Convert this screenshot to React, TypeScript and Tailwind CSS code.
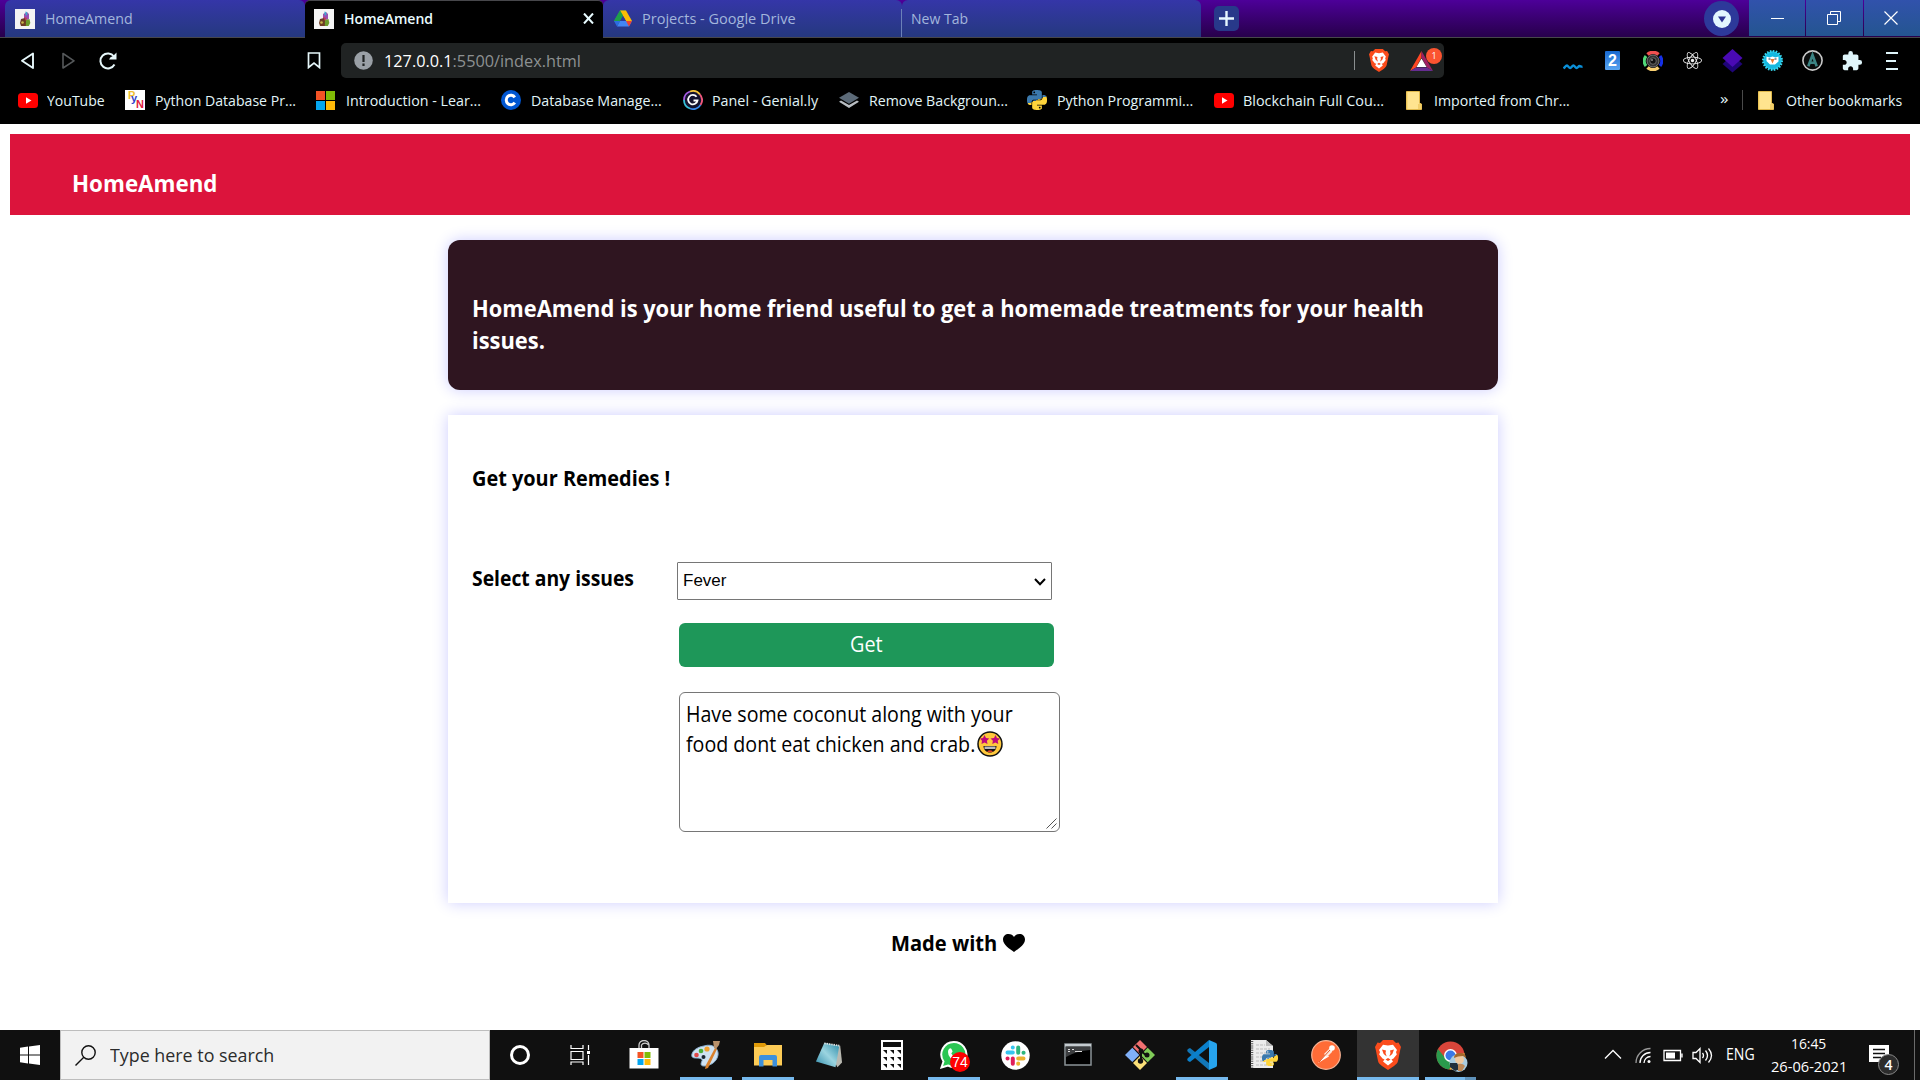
import { useLayoutEffect, useRef, type ReactNode } from 'react';
import { SiPython } from 'react-icons/si';
import { FaReact } from 'react-icons/fa';
import { MdExtension } from 'react-icons/md';

/* Single line of text condensed or expanded to the width of its box. */
function T({ className = '', children }: { className?: string; children: ReactNode }) {
  const box = useRef<HTMLDivElement>(null);
  const text = useRef<HTMLSpanElement>(null);
  useLayoutEffect(() => {
    const fit = () => {
      if (!box.current || !text.current) return;
      text.current.style.transform = `scaleX(${box.current.clientWidth / text.current.offsetWidth})`;
    };
    fit();
    document.fonts?.ready.then(fit);
  }, []);
  return (
    <div ref={box} className={`shrink-0 whitespace-nowrap ${className}`}>
      <span ref={text} className="inline-block origin-left">{children}</span>
    </div>
  );
}

function Favicon() {
  return (
    <svg width="20" height="20" viewBox="0 0 20 20" className="shrink-0">
      <rect width="20" height="20" fill="#f4f4f4" />
      <path d="M9 5l3-2 2 2v5l-2 1-3-1z" fill="#9a4fb0" />
      <path d="M10.500 2.500l1.500.5.500 3-2 .5z" fill="#3fa8d0" />
      <path d="M6 10l4-1 2 3-1 5H6l-1-3z" fill="#6d3b24" />
      <path d="M11 11l3.500-1 .8 4-1.500 3h-3z" fill="#6c9c2c" />
      <circle cx="7.500" cy="13.500" r="1.300" fill="#c9b84a" />
      <path d="M9 8l3 1-1 3z" fill="#c33b50" />
    </svg>
  );
}

function DriveIcon() {
  return (
    <svg width="18" height="17" viewBox="0 0 18 16" className="shrink-0">
      <path d="M6 0h6L4 14 0 10.500z" fill="#34a853" />
      <path d="M6 0h6l6 10.500h-6z" fill="#fbbc04" />
      <path d="M6 0l3 5-3 5.500H0z" fill="#1e9e4a" />
      <path d="M6 10.500h12L15 16H3z" fill="#4285f4" />
      <path d="M0 10.500h6L3 16z" fill="#2b6de0" />
      <path d="M12 10.500h6L15 16z" fill="#ea4335" />
      <path d="M9 5.500l2.800 5H6.200z" fill="#2e3899" />
    </svg>
  );
}

function YouTube() {
  return (
    <svg width="20" height="15" viewBox="0 0 20 15" className="shrink-0">
      <rect width="20" height="15" rx="3.500" fill="#f00" />
      <path d="M8 4.300l5.500 3.200L8 10.700z" fill="#fff" />
    </svg>
  );
}

function Folder() {
  return (
    <svg width="16" height="19" viewBox="0 0 16 19" className="shrink-0">
      <path d="M.5.500h13V12l2 1v5.500H.5z" fill="#ffe48f" stroke="#e0b84a" />
      <path d="M12 18v-5h3.500v5z" fill="#f3cf6a" />
      <path d="M1 1v17" stroke="#f6cf62" />
    </svg>
  );
}

function PynIcon() {
  return (
    <div className="relative h-5 w-5 shrink-0 bg-white font-['Liberation_Sans'] text-[11px] leading-none font-bold">
      <span className="absolute top-0 left-[3px] text-[#f0c030]">P</span>
      <span className="absolute top-[3px] left-[6px] text-[#3040c8]">y</span>
      <span className="absolute top-[9px] left-[11px] text-[#e02040]">N</span>
    </div>
  );
}

function MsIcon({ size }: { size: number }) {
  return (
    <svg width={size} height={size} viewBox="0 0 19 19" className="shrink-0">
      <path d="M0 0h9v9H0z" fill="#f35325" />
      <path d="M10 0h9v9h-9z" fill="#81bc06" />
      <path d="M0 10h9v9H0z" fill="#05a6f0" />
      <path d="M10 10h9v9h-9z" fill="#ffba08" />
    </svg>
  );
}

function CourseraIcon() {
  return (
    <svg width="20" height="20" viewBox="0 0 20 20" className="shrink-0">
      <circle cx="10" cy="10" r="10" fill="#0056d2" />
      <path d="M13.800 7.300A4.700 4.700 0 1 0 13.800 12.700" fill="none" stroke="#fff" strokeWidth="3" />
    </svg>
  );
}

function GeniallyIcon() {
  return (
    <svg width="20" height="20" viewBox="0 0 20 20" className="shrink-0">
      <circle cx="10" cy="10" r="9.500" fill="#15132e" />
      <g fill="none" strokeWidth="1.800">
        <path d="M1 10A9 9 0 0 1 7 1.500" stroke="#a55be0" />
        <path d="M7 1.500A9 9 0 0 1 17 4.500" stroke="#f5c33b" />
        <path d="M17 4.500A9 9 0 0 1 17.500 15" stroke="#f0587c" />
        <path d="M17.500 15A9 9 0 0 1 7 18.500" stroke="#3a8cf0" />
        <path d="M7 18.500A9 9 0 0 1 1 10" stroke="#38c0d8" />
        <path d="M13.600 6.800A4.700 4.700 0 1 0 14.500 10.500H10.500" stroke="#fff" />
      </g>
    </svg>
  );
}

function LayersIcon() {
  return (
    <svg width="20" height="16" viewBox="0 0 20 16" className="shrink-0">
      <path d="M2 8.500L10 13l8-4.500 2 1.300L10 16 0 9.800z" fill="#b9bec3" />
      <path d="M10 0l10 5.800-10 6L0 5.800z" fill="#5c6a78" />
    </svg>
  );
}

function PythonLogo({ size }: { size: number }) {
  return (
    <svg width={size} height={size} viewBox="0 0 24 24" className="shrink-0">
      <defs>
        <linearGradient id="py" x1="0.3" y1="0" x2="0.7" y2="1">
          <stop offset=".5" stopColor="#3b79ad" />
          <stop offset=".5" stopColor="#ffd43b" />
        </linearGradient>
      </defs>
      <SiPython size={24} style={{ fill: 'url(#py)' }} />
    </svg>
  );
}

function BraveIcon({ w, h }: { w: number; h: number }) {
  return (
    <svg width={w} height={h} viewBox="0 0 26 30" preserveAspectRatio="none" className="shrink-0">
      <path d="M8 0h10l3 3 2.500-.4L26 7l-.8 3L23 21c-.4 2-2 3.500-4 5l-6 4-6-4c-2-1.500-3.600-3-4-5L.8 10 0 7l2.500-4.400L5 3z" fill="#fb4c1c" />
      <path d="M13 5.500l5-.8L22 10l-1 2 .8 2.500-3.300 4-2 .9 1.500 2.200L13 25.500l-5-3.900 1.500-2.200-2-.9-3.300-4L5 12l-1-2 4-5.300z" fill="#fff" />
      <path d="M7 9.500l4 1-.5 2.500 1.200 3.500-3-2.500zM19 9.500l-4 1 .5 2.500-1.200 3.500 3-2.500zM13 18l2.500 1.500L13 21l-2.500-1.500z" fill="#fb4c1c" />
    </svg>
  );
}

function Tab({ icon, children, className }: { icon?: ReactNode; children: ReactNode; className: string }) {
  return (
    <div className={`flex h-[37px] shrink-0 items-center rounded-t-[6px] bg-linear-to-b from-[#3536a8] to-[#25387f] text-[#a3b6dc] ${className}`}>
      {icon}
      {children}
    </div>
  );
}

function TabStrip() {
  return (
    <div className="flex h-[38px] items-start border-b border-[#47474b] bg-linear-to-b from-[#4d0099] to-[#27004b] pl-[5px] text-[15px]">
      <Tab className="w-[300px] gap-[10px] pl-[10px]" icon={<Favicon />}>
        <T className="w-[88px]">HomeAmend</T>
      </Tab>
      <div className="flex h-[38px] w-[298px] shrink-0 items-center gap-[10px] rounded-t-[5px] border-t border-[#47474b] bg-black pb-[2px] pl-[9px] font-semibold text-[#e8fbff]">
        <Favicon />
        <T className="w-[89px]">HomeAmend</T>
        <svg width="11" height="11" viewBox="0 0 11 11" className="ml-[140px]">
          <path d="M1 .5l9 10M10 .5l-9 10" stroke="#e8fbff" strokeWidth="2" />
        </svg>
      </div>
      <Tab className="w-[299px] gap-[10px] pl-[11px]" icon={<DriveIcon />}>
        <T className="w-[154px]">Projects - Google Drive</T>
      </Tab>
      <Tab className="w-[299px]" icon={<div className="mt-[9px] mr-2 -ml-px h-7 w-px bg-[#6b80b8]" />}>
        <T className="ml-px w-[57px]">New Tab</T>
      </Tab>
      <div className="mt-[6px] ml-[13px] flex h-[25px] w-[25px] items-center justify-center rounded-[5px] bg-[#28398a]">
        <svg width="15" height="15" viewBox="0 0 15 15">
          <path d="M7.500 0v15M0 7.500h15" stroke="#e6f7ff" strokeWidth="2.400" />
        </svg>
      </div>
      <div className="mt-px ml-auto flex h-[35px] w-[35px] items-center justify-center rounded-full bg-[#2d399a]">
        <svg width="18" height="18" viewBox="0 0 18 18">
          <circle cx="9" cy="9" r="9" fill="#e2f7ff" />
          <path d="M5 6.500h8L9 12.500z" fill="#2d3494" />
        </svg>
      </div>
      <div className="ml-[10px] flex h-9 gap-px">
        <div className="flex w-14 items-center justify-center bg-linear-to-b from-[#3152ac] to-[#245590]">
          <div className="h-px w-[13px] bg-white" />
        </div>
        <div className="flex w-[57px] items-center justify-center bg-linear-to-b from-[#3152ac] to-[#245590] pr-[2px]">
          <svg width="14" height="14" viewBox="0 0 14 14" fill="none" stroke="#fff">
            <path d="M.5 3.500h10v10H.5zM3.500 3V.500h10v10H11" />
          </svg>
        </div>
        <div className="flex w-14 items-center justify-center bg-linear-to-b from-[#3152ac] to-[#245590] pr-[2px]">
          <svg width="14" height="14" viewBox="0 0 14 14" stroke="#fff" strokeWidth="1.200">
            <path d="M.5.500l13 13M13.500.500l-13 13" />
          </svg>
        </div>
      </div>
    </div>
  );
}

function Extensions() {
  return (
    <div className="ml-auto flex items-center">
      <svg width="20" height="20" viewBox="0 0 20 20">
        <path d="M.5 17.500C2 16 3 14.500 4 14.500s2 2.500 3.200 2.500 2-2.500 3.200-2.500 2 2.500 3.200 2.500 1.800-2 2.900-2 1.500 1 3 .5" fill="none" stroke="#0a8fd8" strokeWidth="2.400" />
      </svg>
      <div className="ml-[22px] flex h-[19px] w-[15px] items-center justify-center rounded-[1px] bg-linear-to-b from-[#1769d0] to-[#58a4f0] font-['Liberation_Sans'] text-[16px] font-bold text-white">2</div>
      <svg width="20" height="20" viewBox="0 0 20 20" className="ml-[23px]" fill="none">
        <path d="M4.500 3.500a8.500 8.500 0 0 1 11 0" stroke="#f05050" strokeWidth="3.600" />
        <path d="M17 5a8.500 8.500 0 0 1 0 10" stroke="#1530e8" strokeWidth="3" />
        <path d="M15.500 16.500a8.500 8.500 0 0 1-11 0" stroke="#f8cf70" strokeWidth="3.600" />
        <path d="M3 15A8.500 8.500 0 0 1 3 5" stroke="#52d878" strokeWidth="3" />
        <circle cx="10" cy="10" r="6" fill="#333" stroke="#777" />
        <circle cx="10" cy="10" r="3.300" fill="#111" stroke="#666" />
        <circle cx="9" cy="9" r="1" fill="#888" />
      </svg>
      <FaReact size={19} color="#f2f2f2" className="ml-[20px]" />
      <svg width="21" height="24" viewBox="0 0 21 24" className="ml-[20px]">
        <path d="M10.500 6L20.500 15 10.500 23.500.5 15z" fill="#1f0478" />
        <path d="M10.500 0L20.500 9 10.500 18 .5 9z" fill="#4a0ab4" />
      </svg>
      <svg width="21" height="21" viewBox="0 0 21 21" className="ml-[19px]">
        <circle cx="10.500" cy="10.500" r="9.300" fill="#14b8e0" stroke="#38d8f0" strokeWidth="2.400" strokeDasharray="1.600 1.320" />
        <path d="M4.500 6.500l3 1 3-1 3 1 3-1v5L13 14.500H8l-3.500-3.500z" fill="#fff" />
        <path d="M8.500 9h4l-2 4.500z" fill="#e87830" />
        <path d="M6.500 9h2M12.500 9h2" stroke="#234" strokeWidth="1.200" />
      </svg>
      <svg width="21" height="21" viewBox="0 0 21 21" className="ml-[19px]">
        <circle cx="10.500" cy="10.500" r="9.600" fill="#0a0c0c" stroke="#c9c9c9" strokeWidth="1.600" />
        <path d="M6.300 16.200L10.500 5l4.200 11.200M7.500 12.700h6" fill="none" stroke="#3c8484" strokeWidth="2.600" />
      </svg>
      <MdExtension size={22} color="#dff5fa" className="ml-[18px]" />
      <div className="mr-[22px] ml-[23px] flex w-[12px] flex-col gap-[6px]">
        <div className="h-[2px] bg-[#dff5fa]" />
        <div className="h-[2px] w-[10px] bg-[#dff5fa]" />
        <div className="h-[2px] bg-[#dff5fa]" />
      </div>
    </div>
  );
}

function Toolbar() {
  return (
    <div className="flex h-[45px] items-center">
      <svg width="100" height="20" viewBox="0 0 100 20" className="ml-[20px] shrink-0" fill="none">
        <path d="M13 2.500v14.500L2 9.800z" stroke="#e6f7fa" strokeWidth="1.900" strokeLinejoin="round" />
        <path d="M43 2.500v14.500L54 9.800z" stroke="#55585a" strokeWidth="1.600" strokeLinejoin="round" />
        <path d="M94.500 13.500A7.500 7.500 0 1 1 94 5.500" stroke="#e6f7fa" strokeWidth="2" />
        <path d="M96.500 1.500v7h-7.500q1-3 4-3.500z" fill="#e6f7fa" />
      </svg>
      <svg width="14" height="17" viewBox="0 0 14 17" className="ml-[187px] shrink-0" fill="none">
        <path d="M1.500 1h11v14.500L7 11l-5.500 4.500z" stroke="#e6f7fa" strokeWidth="1.700" />
      </svg>
      <div className="ml-[20px] flex h-[35px] w-[1103px] shrink-0 items-center rounded-[5px] bg-[#202323] text-[17px]">
        <svg width="19" height="19" viewBox="0 0 19 19" className="ml-[13px]">
          <circle cx="9.500" cy="9.500" r="9.300" fill="#9aa0a6" />
          <path d="M9.500 4v7M9.500 12.500V15" stroke="#202323" strokeWidth="2.200" />
        </svg>
        <T className="ml-[11px] w-[197px] text-[#8d9192]"><span className="text-white">127.0.0.1</span>:5500/index.html</T>
        <div className="ml-auto h-[19px] w-px bg-[#8a8f90]" />
        <div className="ml-[14px]"><BraveIcon w={20} h={23} /></div>
        <div className="relative mr-[11px] ml-[21px]">
          <svg width="23" height="20" viewBox="0 0 23 20">
            <path d="M11.500 0L0 20l6-3.500 5.500-10z" fill="#ff4724" />
            <path d="M11.500 0L23 20l-6-3.500-5.500-10z" fill="#9e1f63" />
            <path d="M0 20h23l-6-3.500H6z" fill="#662d91" />
            <path d="M11.500 7.500l5 8.500h-10z" fill="#fff" />
          </svg>
          <div className="absolute -top-[3px] left-[16px] flex h-[16px] w-[16px] items-center justify-center rounded-full bg-[#fb5430] text-[9px] text-white">1</div>
        </div>
      </div>
      <Extensions />
    </div>
  );
}

function Bookmarks() {
  return (
    <div className="flex h-[41px] items-center pb-[7px] pl-[18px] text-[15px] text-[#e2f5f8]">
      <YouTube /><T className="mr-[20px] ml-[9px] w-[58px]">YouTube</T>
      <PynIcon /><T className="mr-[20px] ml-[10px] w-[141px]">Python Database Pr...</T>
      <MsIcon size={19} /><T className="mr-[20px] ml-[11px] w-[135px]">Introduction - Lear...</T>
      <CourseraIcon /><T className="mr-[21px] ml-[10px] w-[131px]">Database Manage...</T>
      <GeniallyIcon /><T className="mr-[21px] ml-[9px] w-[106px]">Panel - Genial.ly</T>
      <LayersIcon /><T className="mr-[19px] ml-[10px] w-[139px]">Remove Backgroun...</T>
      <PythonLogo size={20} /><T className="mr-[21px] ml-[10px] w-[136px]">Python Programmi...</T>
      <YouTube /><T className="mr-[22px] ml-[9px] w-[141px]">Blockchain Full Cou...</T>
      <Folder /><T className="ml-[12px] w-[136px]">Imported from Chr...</T>
      <T className="mb-1 ml-auto w-[8px]">»</T>
      <div className="mr-[15px] ml-[14px] h-5 w-px bg-[#4a4a4a]" />
      <Folder /><T className="mr-[18px] ml-[12px] w-[116px]">Other bookmarks</T>
    </div>
  );
}

function Emoji() {
  return (
    <svg width="26" height="26" viewBox="0 0 26 26">
      <circle cx="13" cy="13" r="12" fill="#ffc83d" stroke="#111" strokeWidth="1.500" />
      <path d="M7.500 4l1.500 3 3.300.5-2.400 2.300.6 3.300-3-1.500-3 1.500.5-3.300L3 7.500 6 7z" fill="#c0087c" />
      <path d="M18.500 4L20 7l3 .5-2.300 2.300.6 3.300-3-1.500-3 1.500.6-3.300-2.400-2.300L17 7z" fill="#c0087c" />
      <path d="M6.500 15h13c0 4-3 6.500-6.500 6.500S6.500 19 6.500 15z" fill="#111" />
      <path d="M7.500 15.500h11v2.500h-11z" fill="#bbb" />
      <path d="M10 20.500q3-2.500 6 0-3 1.500-6 0z" fill="#e8402a" />
    </svg>
  );
}

function Page() {
  return (
    <main className="flex h-[906px] flex-col bg-white pt-[10px]">
      <header className="mx-[10px] h-[81px] bg-[#dc143c] pt-[34px] pl-[62px] text-[22.5px] leading-8 font-bold text-white">
        <T className="w-[145px]">HomeAmend</T>
      </header>
      <section className="mt-[25px] ml-[448px] h-[150px] w-[1050px] rounded-[12px] bg-[#2f1520] pt-[53px] pl-[24px] text-[22.5px] leading-8 font-bold text-white shadow-[0_0_15px_rgba(0,0,255,0.2)]">
        <T className="w-[952px]">HomeAmend is your home friend useful to get a homemade treatments for your health</T>
        <T className="w-[73px]">issues.</T>
      </section>
      <section className="mt-[25px] ml-[448px] h-[488px] w-[1050px] bg-white pt-[48px] pl-[24px] text-[21px] leading-[30px] shadow-[0_0_15px_rgba(0,0,255,0.2)]">
        <T className="w-[198px] font-bold">Get your Remedies !</T>
        <div className="mt-[69px] flex">
          <T className="mt-px w-[162px] font-bold">Select any issues</T>
          <div className="ml-[43px]">
            <div className="flex h-[38px] w-[375px] items-center justify-between rounded-[1px] border border-[#767676] pt-px pr-[5px] pl-[5px] font-['Liberation_Sans'] text-[16.600px] leading-none">
              <T className="w-[43px]">Fever</T>
              <svg width="12" height="8" viewBox="0 0 12 8" fill="none">
                <path d="M1 1l5 5.200L11 1" stroke="#000" strokeWidth="2" />
              </svg>
            </div>
            <div className="mt-[23px] ml-[2px] flex h-[44px] w-[375px] justify-center rounded-[6px] bg-[#1e9759] pt-[6px] pr-px text-white">
              <T className="w-[33px]">Get</T>
            </div>
            <div className="relative mt-[25px] ml-[2px] h-[140px] w-[381px] rounded-[6px] border border-[#767676] bg-white pt-[6px] pl-[6px]">
              <T className="w-[327px]">Have some coconut along with your</T>
              <div className="flex h-[30px] items-center gap-[2px]">
                <T className="w-[289px]">food dont eat chicken and crab.</T>
                <Emoji />
              </div>
              <svg width="11" height="11" viewBox="0 0 11 11" className="absolute right-[2px] bottom-[2px]" stroke="#555">
                <path d="M.5 10.500l10-10M5.500 10.500l5-5" />
              </svg>
            </div>
          </div>
        </div>
      </section>
      <footer className="mt-[25px] flex h-[30px] items-center gap-[6px] pl-[891px] text-[20.500px] leading-[30px] font-bold">
        <T className="w-[106px]">Made with</T>
        <svg width="22" height="18" viewBox="0 0 22 18">
          <path d="M11 18C7 15 0 11 0 5.500 0 2 2.500 0 5.500 0 8 0 10 1 11 3c1-2 3-3 5.500-3C19.500 0 22 2 22 5.500 22 11 15 15 11 18z" />
        </svg>
      </footer>
    </main>
  );
}

function Cell({ line, active, children }: { line?: boolean; active?: boolean; children: ReactNode }) {
  return (
    <div className={`relative flex h-[50px] w-[62px] shrink-0 items-center justify-center ${active ? 'bg-[#333333]' : ''}`}>
      {children}
      {line && <div className={`absolute bottom-0 h-[3px] bg-[#76b9ed] ${active ? 'inset-x-0' : 'inset-x-[5px]'}`} />}
    </div>
  );
}

function TaskIcons() {
  return (
    <div className="flex">
      <Cell><div className="h-5 w-5 rounded-full border-[3px] border-white" /></Cell>
      <Cell>
        <svg width="20" height="20" viewBox="0 0 20 20" fill="none" stroke="#fff" strokeWidth="1.200" className="mr-1">
          <path d="M1 0v3.500h12V0M1 6.500h12v8H1zM1 20v-3h12v3M18.500 0v5M18.500 10v10" />
          <path d="M17 6h3v3h-3z" fill="#fff" stroke="none" />
        </svg>
      </Cell>
      <Cell>
        <svg width="30" height="30" viewBox="0 0 30 30" className="mr-px">
          <path d="M10 9V5a5 4.500 0 0 1 10 0v4M12.500 9V5a4 3.500 0 0 1 7 0" fill="none" stroke="#ccc" strokeWidth="1.300" />
          <path d="M.5 8h29v20.500h-29z" fill="#fff" />
          <path d="M8.500 12h6v6h-6z" fill="#f35325" />
          <path d="M15.500 12h6v6h-6z" fill="#81bc06" />
          <path d="M8.500 19h6v6h-6z" fill="#05a6f0" />
          <path d="M15.500 19h6v6h-6z" fill="#ffba08" />
        </svg>
      </Cell>
      <Cell line>
        <svg width="30" height="30" viewBox="0 0 30 30">
          <path d="M13 6C22 3 28 9 27 15c-1 7-8 11-14 11-4 0-3-3-2-5s-2-3-5-3-6 0-5-4c1-4 6-7 12-8z" fill="#cfe2f2" stroke="#8db4d4" />
          <circle cx="5.500" cy="15" r="2.300" fill="#e04848" />
          <circle cx="10" cy="11" r="2.300" fill="#4caf3a" />
          <circle cx="16" cy="9" r="2.600" fill="#f0a030" />
          <circle cx="12.500" cy="17" r="2" fill="#1a2530" />
          <path d="M24 8l2 1-9 19-3 1 1-4z" fill="#d8802c" />
          <path d="M22 1l7 0-1 4-3 4-2-1z" fill="#b8906a" />
        </svg>
      </Cell>
      <Cell line>
        <svg width="28" height="24" viewBox="0 0 28 24">
          <path d="M0 0h11l2 2.500V8H0z" fill="#e09a08" />
          <path d="M0 4h10l3-2h15v20.500H0z" fill="#fccb56" />
          <path d="M5 23.500V14q0-2 2-2h14q2 0 2 2v9.500h-4.500V17h-9v6.500z" fill="#3d90dc" />
        </svg>
      </Cell>
      <Cell>
        <svg width="28" height="28" viewBox="0 0 30 28" className="mr-[2px]">
          <defs>
            <linearGradient id="np" x1="1" y1="0" x2="0" y2="1">
              <stop offset="0" stopColor="#2b8ba8" />
              <stop offset=".5" stopColor="#9bd4e0" />
              <stop offset="1" stopColor="#2f8cab" />
            </linearGradient>
          </defs>
          <path d="M11 2l16 2 2 18-5 5z" fill="#b8b8b0" />
          <path d="M10 1l16 3-4 23-21-6z" fill="url(#np)" />
          <path d="M10 1.500l16 2.500" stroke="#ddd" strokeWidth="2" strokeDasharray="1.500 1" />
        </svg>
      </Cell>
      <Cell>
        <svg width="22" height="30" viewBox="0 0 22 30">
          <path d="M0 0h22v30H0z" fill="#fff" />
          <path d="M2 2h18v5H2z" fill="#111" />
          <g fill="#111">
            <path d="M2 10h4v4zM9 10h4v4zM16 10h4v4zM2 17h4v4zM9 17h4v4zM16 17h4v4zM2 24h4v4zM9 24h4v4zM16 24h4v4z" />
          </g>
        </svg>
      </Cell>
      <Cell line>
        <svg width="28" height="28" viewBox="0 0 28 28" className="mr-[1px] mb-[1px]">
          <path d="M14 1a12.500 12.500 0 1 1-6 23.500L1.500 26.500l2-6A12.500 12.500 0 0 1 14 1z" fill="#2bc653" stroke="#fff" strokeWidth="2" />
          <path d="M9 8q2-2 3 1l.6 1.500-1.300 2q2 3.500 5 4.500l1.700-1.800 3 1.500q0 3.500-4 3.500Q8 18 8 11q0-2 1-3z" fill="#fff" />
        </svg>
        <div className="absolute top-[22px] left-[27px] flex h-5 w-5 items-center justify-center rounded-full bg-[#f00] font-['Liberation_Sans'] text-[14px] text-white">74</div>
      </Cell>
      <Cell>
        <svg width="29" height="29" viewBox="0 0 29 29" className="mr-px">
          <circle cx="14.500" cy="14.500" r="14.200" fill="#fff" />
          <g strokeWidth="4" strokeLinecap="round">
            <path d="M11.800 6.500v.1M6.500 11.500h5.300" stroke="#36c5f0" />
            <path d="M17.200 6.500v5.300M22.500 11.800h.1" stroke="#2eb67d" />
            <path d="M17.200 17.500h5.300M17.200 22.600v.1" stroke="#ecb22e" />
            <path d="M11.800 17.500v5.300M6.500 17.400h.1" stroke="#e01e5a" />
          </g>
        </svg>
      </Cell>
      <Cell>
        <svg width="28" height="23" viewBox="0 0 28 23" className="mb-[2px]">
          <path d="M1 1h26v21H1z" fill="#000" stroke="#8b9296" strokeWidth="1.500" />
          <path d="M1 1h26v2.500H1z" fill="#c5ccd0" />
          <path d="M2 4h24v3Q12 8 2 14z" fill="#3c3e40" />
          <path d="M4 6.500h2M8 6.500h2M11 8.500h7M4 8.500h2" stroke="#ddd" strokeWidth="1.200" />
        </svg>
      </Cell>
      <Cell>
        <svg width="30" height="30" viewBox="0 0 30 30">
          <path d="M15 0l7 7-7 7-7-7z" fill="#f07070" />
          <path d="M7.300 7.700l7 7.300-7 7-7.300-7z" fill="#80b0f8" />
          <path d="M22.700 7.700L30 15l-7.300 7.300-7-7.300z" fill="#80cc58" />
          <path d="M15 16l7 7-7 7-7-7z" fill="#fbe078" />
          <path d="M11 5l5 5v12M16 11l6 5" stroke="#111" strokeWidth="2" fill="none" />
          <circle cx="16" cy="11" r="2.500" fill="#111" />
          <circle cx="22" cy="15" r="2.500" fill="#111" />
          <circle cx="15.500" cy="21" r="2.700" fill="#111" />
        </svg>
      </Cell>
      <Cell line>
        <svg width="30" height="30" viewBox="0 0 30 30">
          <path d="M3 8l19 15v7L1 12q-1.500-1.500 0-3z" fill="#1277b8" />
          <path d="M3 22l19-15V0L1 18q-1.500 1.500 0 3z" fill="#0a80cc" />
          <path d="M22 0l7 3q1 .5 1 2v20q0 1.500-1 2l-7 3z" fill="#27a4ee" />
        </svg>
      </Cell>
      <Cell>
        <div className="relative h-[30px] w-[28px]">
          <svg width="24" height="29" viewBox="0 0 24 29">
            <path d="M1 0h15l7 6v22H1z" fill="#ececec" />
            <path d="M16 0v6h7z" fill="#bbb" />
            <path d="M2 1v27" stroke="#555" strokeWidth="2.500" strokeDasharray="1 1.200" />
            <path d="M6 5h9M6 9h14M6 13h14M6 17h9M6 21h9M6 25h14" stroke="#bbb" strokeDasharray="3 1" />
          </svg>
          <div className="absolute right-0 bottom-[4px]"><PythonLogo size={16} /></div>
        </div>
      </Cell>
      <Cell>
        <svg width="30" height="30" viewBox="0 0 30 30">
          <circle cx="15" cy="15" r="14.300" fill="#ff6c37" stroke="#f7b496" strokeWidth="1.200" />
          <path d="M7 23l8-9 3 2.500z" fill="#fff" />
          <path d="M13 14l6-6q3 1 2 4l-5 5z" fill="#fde8dd" />
          <circle cx="21" cy="8" r="2.800" fill="#fff" />
          <path d="M8 22l11-12" stroke="#e0582a" />
        </svg>
      </Cell>
      <Cell line active><BraveIcon w={26} h={30} /></Cell>
      <div className="relative flex h-[50px] w-[62px] items-center justify-center">
        <svg width="32" height="32" viewBox="0 0 32 32" className="mt-[3px] ml-[4px]">
          <circle cx="14.500" cy="14.500" r="14" fill="#d9453a" />
          <path d="M2 8a14 14 0 0 0 11 20.500l6-10-9-.5z" fill="#2a9a4c" />
          <path d="M28.500 12a14 14 0 0 1-15 16.500L20 16z" fill="#f3c23a" />
          <circle cx="14.500" cy="14.500" r="6.500" fill="#fff" />
          <circle cx="14.500" cy="14.500" r="5" fill="#3a78e8" />
          <circle cx="22.500" cy="22" r="9" fill="#a9cce0" />
          <circle cx="23.500" cy="18.500" r="4.500" fill="#f0c9a0" />
          <path d="M18 17q0-5 6-5t6 5l-3-2-5 .5z" fill="#a5692c" />
          <path d="M14 22h7l3 6-5 2-5-4z" fill="#22303c" />
          <path d="M22 23q5-1 7 2l-3 5h-4z" fill="#c08a58" />
        </svg>
        <div className="absolute bottom-0 left-[6px] flex h-[3px] w-[51px] bg-[#5f92ba]"><div className="w-10 bg-[#76b9ed]" /></div>
      </div>
    </div>
  );
}

function Taskbar() {
  return (
    <div className="flex h-[50px] bg-[#101010] text-white">
      <div className="flex w-[60px] items-center justify-center">
        <svg width="20" height="20" viewBox="0 0 20 20" fill="#fff">
          <path d="M0 2.800L8 1.600V9.500H0zM9 1.500L20 0v9.500H9zM0 10.500h8v7.900L0 17.200zM9 10.500h11V20L9 18.500z" />
        </svg>
      </div>
      <div className="flex w-[430px] items-center border border-[#bdbdbd] bg-[#f2f2f2] pl-[14px] text-[18.500px] text-[#2b2b2b]">
        <svg width="21" height="21" viewBox="0 0 21 21" fill="none" stroke="#111" strokeWidth="1.400">
          <circle cx="13.500" cy="7.500" r="6.700" />
          <path d="M8.800 12.300L.5 20.500" />
        </svg>
        <T className="ml-[14px] w-[164px]">Type here to search</T>
      </div>
      <div className="-ml-px"><TaskIcons /></div>
      <div className="ml-auto flex items-center">
        <svg width="109" height="20" viewBox="0 0 109 20" fill="none" stroke="#fff" strokeWidth="1.300">
          <path d="M1 13.500L9 5.500l8 8" />
          <path d="M32 18A14.500 14.500 0 0 1 46.500 3.500" stroke="#999" />
          <path d="M36 18A10.500 10.500 0 0 1 46.500 7.500M40 18a6.500 6.500 0 0 1 6.500-6.500" />
          <circle cx="45" cy="16.500" r="1.500" fill="#fff" stroke="none" />
          <path d="M60 5.500h16.500v10H60zM78 8.500v4" />
          <path d="M62 7.500h9v6h-9z" fill="#fff" stroke="none" />
          <path d="M89 7.500h3l4-4v14l-4-4h-3z" />
          <path d="M98.500 8q2 2.500 0 5M101.500 5.500q4 5 0 10M104.500 3.500q6 7 0 14" />
        </svg>
        <T className="ml-[13px] w-[29px] text-[15.500px]">ENG</T>
        <div className="ml-[15px] flex w-[77px] flex-col items-center text-[15px] leading-[23px]">
          <T className="w-[35px]">16:45</T>
          <T className="w-[76px]">26-06-2021</T>
        </div>
        <div className="relative mb-px ml-[22px] h-[20px] w-[20px]">
          <svg width="20" height="20" viewBox="0 0 20 20">
            <path d="M0 0h20v17h-5l-5 3v-3H0z" fill="#fff" />
            <path d="M4 4.500h12M4 8.500h12M4 12.500h8" stroke="#111" strokeWidth="1.300" />
          </svg>
          <div className="absolute top-[9px] left-[9px] flex h-[21px] w-[21px] items-center justify-center rounded-full border border-[#888] bg-[#2c2c2c] text-[14px] font-semibold">4</div>
        </div>
        <div className="mr-[5px] ml-[25px] h-[50px] w-px bg-[#6a6a6a]" />
      </div>
    </div>
  );
}

export default function App() {
  return (
    <div className="h-[1080px] w-[1920px] overflow-hidden bg-black font-['Open_Sans',sans-serif] text-black">
      <TabStrip />
      <Toolbar />
      <Bookmarks />
      <Page />
      <Taskbar />
    </div>
  );
}
